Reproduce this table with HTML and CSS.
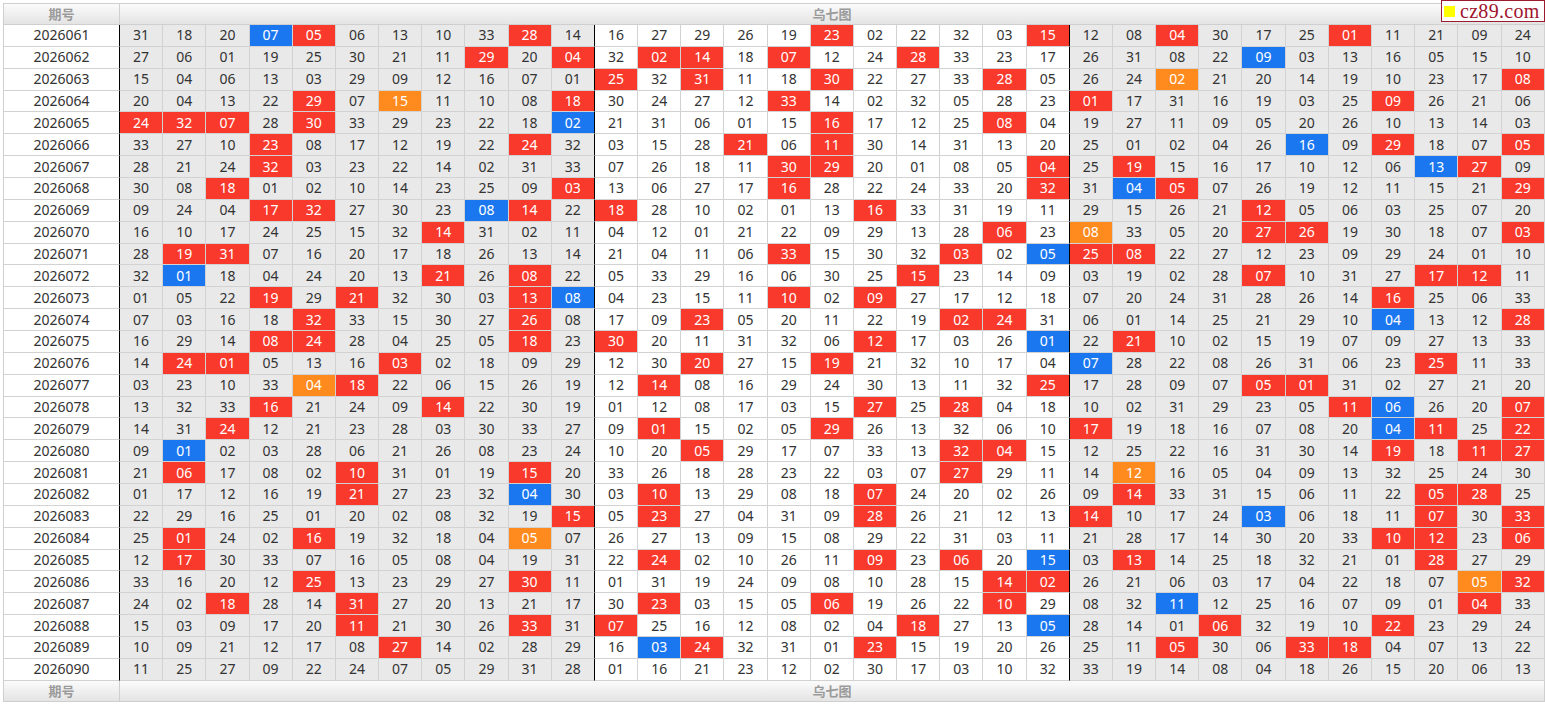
FILE: index.html
```html
<!DOCTYPE html>
<html lang="zh-CN">
<head>
<meta charset="utf-8">
<title>乌七图</title>
<link rel="stylesheet" href="styles.css">
</head>
<body>
<div class="wrap">
<table class="grid">
<colgroup><col class="pcol"><col class="c1" span="11"><col class="c2" span="11"><col class="c3" span="11"></colgroup>
<thead><tr><th class="ph">期号</th><th colspan="33">乌七图</th></tr></thead>
<tbody>
<tr><td class="p">2026061</td><td>31</td><td>18</td><td>20</td><td class="b">07</td><td class="r">05</td><td>06</td><td>13</td><td>10</td><td>33</td><td class="r">28</td><td>14</td><td>16</td><td>27</td><td>29</td><td>26</td><td>19</td><td class="r">23</td><td>02</td><td>22</td><td>32</td><td>03</td><td class="r">15</td><td>12</td><td>08</td><td class="r">04</td><td>30</td><td>17</td><td>25</td><td class="r">01</td><td>11</td><td>21</td><td>09</td><td>24</td></tr>
<tr><td class="p">2026062</td><td>27</td><td>06</td><td>01</td><td>19</td><td>25</td><td>30</td><td>21</td><td>11</td><td class="r">29</td><td>20</td><td class="r">04</td><td>32</td><td class="r">02</td><td class="r">14</td><td>18</td><td class="r">07</td><td>12</td><td>24</td><td class="r">28</td><td>33</td><td>23</td><td>17</td><td>26</td><td>31</td><td>08</td><td>22</td><td class="b">09</td><td>03</td><td>13</td><td>16</td><td>05</td><td>15</td><td>10</td></tr>
<tr><td class="p">2026063</td><td>15</td><td>04</td><td>06</td><td>13</td><td>03</td><td>29</td><td>09</td><td>12</td><td>16</td><td>07</td><td>01</td><td class="r">25</td><td>32</td><td class="r">31</td><td>11</td><td>18</td><td class="r">30</td><td>22</td><td>27</td><td>33</td><td class="r">28</td><td>05</td><td>26</td><td>24</td><td class="o">02</td><td>21</td><td>20</td><td>14</td><td>19</td><td>10</td><td>23</td><td>17</td><td class="r">08</td></tr>
<tr><td class="p">2026064</td><td>20</td><td>04</td><td>13</td><td>22</td><td class="r">29</td><td>07</td><td class="o">15</td><td>11</td><td>10</td><td>08</td><td class="r">18</td><td>30</td><td>24</td><td>27</td><td>12</td><td class="r">33</td><td>14</td><td>02</td><td>32</td><td>05</td><td>28</td><td>23</td><td class="r">01</td><td>17</td><td>31</td><td>16</td><td>19</td><td>03</td><td>25</td><td class="r">09</td><td>26</td><td>21</td><td>06</td></tr>
<tr><td class="p">2026065</td><td class="r">24</td><td class="r">32</td><td class="r">07</td><td>28</td><td class="r">30</td><td>33</td><td>29</td><td>23</td><td>22</td><td>18</td><td class="b">02</td><td>21</td><td>31</td><td>06</td><td>01</td><td>15</td><td class="r">16</td><td>17</td><td>12</td><td>25</td><td class="r">08</td><td>04</td><td>19</td><td>27</td><td>11</td><td>09</td><td>05</td><td>20</td><td>26</td><td>10</td><td>13</td><td>14</td><td>03</td></tr>
<tr><td class="p">2026066</td><td>33</td><td>27</td><td>10</td><td class="r">23</td><td>08</td><td>17</td><td>12</td><td>19</td><td>22</td><td class="r">24</td><td>32</td><td>03</td><td>15</td><td>28</td><td class="r">21</td><td>06</td><td class="r">11</td><td>30</td><td>14</td><td>31</td><td>13</td><td>20</td><td>25</td><td>01</td><td>02</td><td>04</td><td>26</td><td class="b">16</td><td>09</td><td class="r">29</td><td>18</td><td>07</td><td class="r">05</td></tr>
<tr><td class="p">2026067</td><td>28</td><td>21</td><td>24</td><td class="r">32</td><td>03</td><td>23</td><td>22</td><td>14</td><td>02</td><td>31</td><td>33</td><td>07</td><td>26</td><td>18</td><td>11</td><td class="r">30</td><td class="r">29</td><td>20</td><td>01</td><td>08</td><td>05</td><td class="r">04</td><td>25</td><td class="r">19</td><td>15</td><td>16</td><td>17</td><td>10</td><td>12</td><td>06</td><td class="b">13</td><td class="r">27</td><td>09</td></tr>
<tr><td class="p">2026068</td><td>30</td><td>08</td><td class="r">18</td><td>01</td><td>02</td><td>10</td><td>14</td><td>23</td><td>25</td><td>09</td><td class="r">03</td><td>13</td><td>06</td><td>27</td><td>17</td><td class="r">16</td><td>28</td><td>22</td><td>24</td><td>33</td><td>20</td><td class="r">32</td><td>31</td><td class="b">04</td><td class="r">05</td><td>07</td><td>26</td><td>19</td><td>12</td><td>11</td><td>15</td><td>21</td><td class="r">29</td></tr>
<tr><td class="p">2026069</td><td>09</td><td>24</td><td>04</td><td class="r">17</td><td class="r">32</td><td>27</td><td>30</td><td>23</td><td class="b">08</td><td class="r">14</td><td>22</td><td class="r">18</td><td>28</td><td>10</td><td>02</td><td>01</td><td>13</td><td class="r">16</td><td>33</td><td>31</td><td>19</td><td>11</td><td>29</td><td>15</td><td>26</td><td>21</td><td class="r">12</td><td>05</td><td>06</td><td>03</td><td>25</td><td>07</td><td>20</td></tr>
<tr><td class="p">2026070</td><td>16</td><td>10</td><td>17</td><td>24</td><td>25</td><td>15</td><td>32</td><td class="r">14</td><td>31</td><td>02</td><td>11</td><td>04</td><td>12</td><td>01</td><td>21</td><td>22</td><td>09</td><td>29</td><td>13</td><td>28</td><td class="r">06</td><td>23</td><td class="o">08</td><td>33</td><td>05</td><td>20</td><td class="r">27</td><td class="r">26</td><td>19</td><td>30</td><td>18</td><td>07</td><td class="r">03</td></tr>
<tr><td class="p">2026071</td><td>28</td><td class="r">19</td><td class="r">31</td><td>07</td><td>16</td><td>20</td><td>17</td><td>18</td><td>26</td><td>13</td><td>14</td><td>21</td><td>04</td><td>11</td><td>06</td><td class="r">33</td><td>15</td><td>30</td><td>32</td><td class="r">03</td><td>02</td><td class="b">05</td><td class="r">25</td><td class="r">08</td><td>22</td><td>27</td><td>12</td><td>23</td><td>09</td><td>29</td><td>24</td><td>01</td><td>10</td></tr>
<tr><td class="p">2026072</td><td>32</td><td class="b">01</td><td>18</td><td>04</td><td>24</td><td>20</td><td>13</td><td class="r">21</td><td>26</td><td class="r">08</td><td>22</td><td>05</td><td>33</td><td>29</td><td>16</td><td>06</td><td>30</td><td>25</td><td class="r">15</td><td>23</td><td>14</td><td>09</td><td>03</td><td>19</td><td>02</td><td>28</td><td class="r">07</td><td>10</td><td>31</td><td>27</td><td class="r">17</td><td class="r">12</td><td>11</td></tr>
<tr><td class="p">2026073</td><td>01</td><td>05</td><td>22</td><td class="r">19</td><td>29</td><td class="r">21</td><td>32</td><td>30</td><td>03</td><td class="r">13</td><td class="b">08</td><td>04</td><td>23</td><td>15</td><td>11</td><td class="r">10</td><td>02</td><td class="r">09</td><td>27</td><td>17</td><td>12</td><td>18</td><td>07</td><td>20</td><td>24</td><td>31</td><td>28</td><td>26</td><td>14</td><td class="r">16</td><td>25</td><td>06</td><td>33</td></tr>
<tr><td class="p">2026074</td><td>07</td><td>03</td><td>16</td><td>18</td><td class="r">32</td><td>33</td><td>15</td><td>30</td><td>27</td><td class="r">26</td><td>08</td><td>17</td><td>09</td><td class="r">23</td><td>05</td><td>20</td><td>11</td><td>22</td><td>19</td><td class="r">02</td><td class="r">24</td><td>31</td><td>06</td><td>01</td><td>14</td><td>25</td><td>21</td><td>29</td><td>10</td><td class="b">04</td><td>13</td><td>12</td><td class="r">28</td></tr>
<tr><td class="p">2026075</td><td>16</td><td>29</td><td>14</td><td class="r">08</td><td class="r">24</td><td>28</td><td>04</td><td>25</td><td>05</td><td class="r">18</td><td>23</td><td class="r">30</td><td>20</td><td>11</td><td>31</td><td>32</td><td>06</td><td class="r">12</td><td>17</td><td>03</td><td>26</td><td class="b">01</td><td>22</td><td class="r">21</td><td>10</td><td>02</td><td>15</td><td>19</td><td>07</td><td>09</td><td>27</td><td>13</td><td>33</td></tr>
<tr><td class="p">2026076</td><td>14</td><td class="r">24</td><td class="r">01</td><td>05</td><td>13</td><td>16</td><td class="r">03</td><td>02</td><td>18</td><td>09</td><td>29</td><td>12</td><td>30</td><td class="r">20</td><td>27</td><td>15</td><td class="r">19</td><td>21</td><td>32</td><td>10</td><td>17</td><td>04</td><td class="b">07</td><td>28</td><td>22</td><td>08</td><td>26</td><td>31</td><td>06</td><td>23</td><td class="r">25</td><td>11</td><td>33</td></tr>
<tr><td class="p">2026077</td><td>03</td><td>23</td><td>10</td><td>33</td><td class="o">04</td><td class="r">18</td><td>22</td><td>06</td><td>15</td><td>26</td><td>19</td><td>12</td><td class="r">14</td><td>08</td><td>16</td><td>29</td><td>24</td><td>30</td><td>13</td><td>11</td><td>32</td><td class="r">25</td><td>17</td><td>28</td><td>09</td><td>07</td><td class="r">05</td><td class="r">01</td><td>31</td><td>02</td><td>27</td><td>21</td><td>20</td></tr>
<tr><td class="p">2026078</td><td>13</td><td>32</td><td>33</td><td class="r">16</td><td>21</td><td>24</td><td>09</td><td class="r">14</td><td>22</td><td>30</td><td>19</td><td>01</td><td>12</td><td>08</td><td>17</td><td>03</td><td>15</td><td class="r">27</td><td>25</td><td class="r">28</td><td>04</td><td>18</td><td>10</td><td>02</td><td>31</td><td>29</td><td>23</td><td>05</td><td class="r">11</td><td class="b">06</td><td>26</td><td>20</td><td class="r">07</td></tr>
<tr><td class="p">2026079</td><td>14</td><td>31</td><td class="r">24</td><td>12</td><td>21</td><td>23</td><td>28</td><td>03</td><td>30</td><td>33</td><td>27</td><td>09</td><td class="r">01</td><td>15</td><td>02</td><td>05</td><td class="r">29</td><td>26</td><td>13</td><td>32</td><td>06</td><td>10</td><td class="r">17</td><td>19</td><td>18</td><td>16</td><td>07</td><td>08</td><td>20</td><td class="b">04</td><td class="r">11</td><td>25</td><td class="r">22</td></tr>
<tr><td class="p">2026080</td><td>09</td><td class="b">01</td><td>02</td><td>03</td><td>28</td><td>06</td><td>21</td><td>26</td><td>08</td><td>23</td><td>24</td><td>10</td><td>20</td><td class="r">05</td><td>29</td><td>17</td><td>07</td><td>33</td><td>13</td><td class="r">32</td><td class="r">04</td><td>15</td><td>12</td><td>25</td><td>22</td><td>16</td><td>31</td><td>30</td><td>14</td><td class="r">19</td><td>18</td><td class="r">11</td><td class="r">27</td></tr>
<tr><td class="p">2026081</td><td>21</td><td class="r">06</td><td>17</td><td>08</td><td>02</td><td class="r">10</td><td>31</td><td>01</td><td>19</td><td class="r">15</td><td>20</td><td>33</td><td>26</td><td>18</td><td>28</td><td>23</td><td>22</td><td>03</td><td>07</td><td class="r">27</td><td>29</td><td>11</td><td>14</td><td class="o">12</td><td>16</td><td>05</td><td>04</td><td>09</td><td>13</td><td>32</td><td>25</td><td>24</td><td>30</td></tr>
<tr><td class="p">2026082</td><td>01</td><td>17</td><td>12</td><td>16</td><td>19</td><td class="r">21</td><td>27</td><td>23</td><td>32</td><td class="b">04</td><td>30</td><td>03</td><td class="r">10</td><td>13</td><td>29</td><td>08</td><td>18</td><td class="r">07</td><td>24</td><td>20</td><td>02</td><td>26</td><td>09</td><td class="r">14</td><td>33</td><td>31</td><td>15</td><td>06</td><td>11</td><td>22</td><td class="r">05</td><td class="r">28</td><td>25</td></tr>
<tr><td class="p">2026083</td><td>22</td><td>29</td><td>16</td><td>25</td><td>01</td><td>20</td><td>02</td><td>08</td><td>32</td><td>19</td><td class="r">15</td><td>05</td><td class="r">23</td><td>27</td><td>04</td><td>31</td><td>09</td><td class="r">28</td><td>26</td><td>21</td><td>12</td><td>13</td><td class="r">14</td><td>10</td><td>17</td><td>24</td><td class="b">03</td><td>06</td><td>18</td><td>11</td><td class="r">07</td><td>30</td><td class="r">33</td></tr>
<tr><td class="p">2026084</td><td>25</td><td class="r">01</td><td>24</td><td>02</td><td class="r">16</td><td>19</td><td>32</td><td>18</td><td>04</td><td class="o">05</td><td>07</td><td>26</td><td>27</td><td>13</td><td>09</td><td>15</td><td>08</td><td>29</td><td>22</td><td>31</td><td>03</td><td>11</td><td>21</td><td>28</td><td>17</td><td>14</td><td>30</td><td>20</td><td>33</td><td class="r">10</td><td class="r">12</td><td>23</td><td class="r">06</td></tr>
<tr><td class="p">2026085</td><td>12</td><td class="r">17</td><td>30</td><td>33</td><td>07</td><td>16</td><td>05</td><td>08</td><td>04</td><td>19</td><td>31</td><td>22</td><td class="r">24</td><td>02</td><td>10</td><td>26</td><td>11</td><td class="r">09</td><td>23</td><td class="r">06</td><td>20</td><td class="b">15</td><td>03</td><td class="r">13</td><td>14</td><td>25</td><td>18</td><td>32</td><td>21</td><td>01</td><td class="r">28</td><td>27</td><td>29</td></tr>
<tr><td class="p">2026086</td><td>33</td><td>16</td><td>20</td><td>12</td><td class="r">25</td><td>13</td><td>23</td><td>29</td><td>27</td><td class="r">30</td><td>11</td><td>01</td><td>31</td><td>19</td><td>24</td><td>09</td><td>08</td><td>10</td><td>28</td><td>15</td><td class="r">14</td><td class="r">02</td><td>26</td><td>21</td><td>06</td><td>03</td><td>17</td><td>04</td><td>22</td><td>18</td><td>07</td><td class="o">05</td><td class="r">32</td></tr>
<tr><td class="p">2026087</td><td>24</td><td>02</td><td class="r">18</td><td>28</td><td>14</td><td class="r">31</td><td>27</td><td>20</td><td>13</td><td>21</td><td>17</td><td>30</td><td class="r">23</td><td>03</td><td>15</td><td>05</td><td class="r">06</td><td>19</td><td>26</td><td>22</td><td class="r">10</td><td>29</td><td>08</td><td>32</td><td class="b">11</td><td>12</td><td>25</td><td>16</td><td>07</td><td>09</td><td>01</td><td class="r">04</td><td>33</td></tr>
<tr><td class="p">2026088</td><td>15</td><td>03</td><td>09</td><td>17</td><td>20</td><td class="r">11</td><td>21</td><td>30</td><td>26</td><td class="r">33</td><td>31</td><td class="r">07</td><td>25</td><td>16</td><td>12</td><td>08</td><td>02</td><td>04</td><td class="r">18</td><td>27</td><td>13</td><td class="b">05</td><td>28</td><td>14</td><td>01</td><td class="r">06</td><td>32</td><td>19</td><td>10</td><td class="r">22</td><td>23</td><td>29</td><td>24</td></tr>
<tr><td class="p">2026089</td><td>10</td><td>09</td><td>21</td><td>12</td><td>17</td><td>08</td><td class="r">27</td><td>14</td><td>02</td><td>28</td><td>29</td><td>16</td><td class="b">03</td><td class="r">24</td><td>32</td><td>31</td><td>01</td><td class="r">23</td><td>15</td><td>19</td><td>20</td><td>26</td><td>25</td><td>11</td><td class="r">05</td><td>30</td><td>06</td><td class="r">33</td><td class="r">18</td><td>04</td><td>07</td><td>13</td><td>22</td></tr>
<tr><td class="p">2026090</td><td>11</td><td>25</td><td>27</td><td>09</td><td>22</td><td>24</td><td>07</td><td>05</td><td>29</td><td>31</td><td>28</td><td>01</td><td>16</td><td>21</td><td>23</td><td>12</td><td>02</td><td>30</td><td>17</td><td>03</td><td>10</td><td>32</td><td>33</td><td>19</td><td>14</td><td>08</td><td>04</td><td>18</td><td>26</td><td>15</td><td>20</td><td>06</td><td>13</td></tr>
</tbody>
<tfoot><tr><th class="ph">期号</th><th colspan="33">乌七图</th></tr></tfoot>
</table>
<div class="logo"><span class="sq"></span><span class="lt">cz89.com</span></div>
</div>
</body>
</html>
```
FILE: styles.css
```css
html, body {
  margin: 0;
  padding: 0;
  background: #fff;
}
body {
  font-family: "Noto Sans", "Noto Sans CJK SC", sans-serif;
}
.wrap {
  position: relative;
  padding: 3px 0 0 3px;
  width: 1542px;
}
.grid {
  border-collapse: separate;
  border-spacing: 0;
  table-layout: fixed;
  width: 1542px;
  border-top: 1px solid #cfcfcf;
  border-left: 1px solid #cfcfcf;
}
.pcol { width: 116px; }
.c1, .c3 { background: #e9e9e9; }
.c2 { background: #fff; }
.grid th,
.grid td {
  padding: 0;
  text-align: center;
  border-right: 1px solid #d2d2d2;
  border-bottom: 1px solid #d2d2d2;
  overflow: hidden;
  white-space: nowrap;
}
.grid thead tr,
.grid tfoot tr {
  height: 21px;
}
.grid th {
  background: linear-gradient(#fbfbfb, #e4e4e4);
  color: #9a9a9a;
  font-family: "Noto Sans CJK SC", sans-serif;
  font-weight: bold;
  font-size: 13px;
  line-height: 20px;
  border-color: #cfcfcf;
}
.grid tbody tr {
  height: 21.87px;
}
.grid td {
  font-size: 14px;
  line-height: 20px;
  color: #333;
}
.grid td.p {
  background: #fff;
  border-right-color: #000;
  color: #333;
}
.grid tbody td:nth-child(12),
.grid tbody td:nth-child(23) {
  border-right-color: #000;
}
.grid td.r { background: #f8392b; color: #fff; }
.grid td.b { background: #1b77ef; color: #fff; }
.grid td.o { background: #ff8a1d; color: #fff; }
.logo {
  position: absolute;
  top: 0;
  right: 0;
  width: 100px;
  height: 20px;
  border: 1px solid #9c1a2e;
  background: #fff;
  display: flex;
  align-items: center;
  gap: 5px;
  padding-left: 2px;
}
.sq {
  width: 11px;
  height: 11px;
  background: #ffff00;
  flex: none;
}
.lt {
  font-family: "Liberation Serif", serif;
  font-size: 20px;
  line-height: 20px;
  color: #a0142c;
  letter-spacing: 0.3px;
}
```
